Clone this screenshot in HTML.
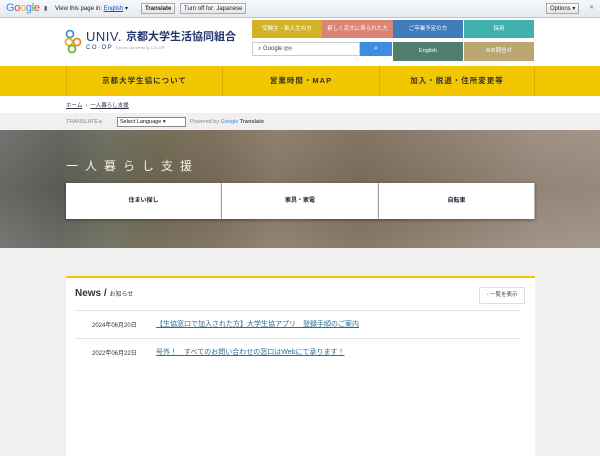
<!DOCTYPE html>
<html><head><meta charset="utf-8"><style>
*{margin:0;padding:0;box-sizing:border-box}
body{width:600px;height:450px;overflow:hidden;background:#f1f1f1;font-family:"Liberation Sans","Noto Sans CJK JP",sans-serif;position:relative}
.a{position:absolute}
.gb{left:0;top:0;width:600px;height:18px;background:linear-gradient(#f6f8fb,#e4e9f1);border-bottom:1px solid #b9c3d3;font-size:6px;color:#222}
.btn{background:linear-gradient(#fdfdfd,#e4e4e4);border:1px solid #aaa;font-size:6px;padding:1px 3px;height:11px;top:3px;line-height:8px}
.hd{left:0;top:18px;width:600px;height:48px;background:#fff}
.cb{color:#fff;font-size:5.5px;text-align:center;line-height:18px;height:18px}
.nav{left:0;top:66px;width:600px;height:30px;background:#f2c700}
.nav div{position:absolute;top:0;height:30px;line-height:30px;text-align:center;font-size:7.5px;color:#333;letter-spacing:1px;border-left:1px solid #d9b200;font-weight:bold}
.box{top:183px;height:36px;background:#fff;font-size:6px;text-align:center;line-height:36px;color:#223;border-right:1px solid #bbb;font-weight:bold}
</style></head><body>
<div class="a gb">
 <span class="a" style="left:6px;top:2px;font-size:11px;letter-spacing:-0.3px"><span style="color:#4285f4">G</span><span style="color:#ea4335">o</span><span style="color:#fbbc05">o</span><span style="color:#4285f4">g</span><span style="color:#34a853">l</span><span style="color:#ea4335">e</span></span>
 <span class="a" style="left:44px;top:5px;color:#557">&#9646;</span>
 <span class="a" style="left:55px;top:5px">View this page in: <u style="color:#15c">English</u> ▾</span>
 <span class="a btn" style="left:141px;font-weight:bold">Translate</span>
 <span class="a btn" style="left:180px">Turn off for: Japanese</span>
 <span class="a btn" style="left:546px">Options ▾</span>
 <span class="a" style="left:589px;top:4px;font-size:6px;color:#777">✕</span>
</div>
<div class="a hd">
 <svg class="a" style="left:64px;top:11px" width="20" height="26" viewBox="0 0 20 26"><circle cx="6" cy="5" r="3.5" fill="none" stroke="#3a9ad9" stroke-width="1.8"/><circle cx="5" cy="13" r="3.5" fill="none" stroke="#e6b21a" stroke-width="1.8"/><circle cx="13" cy="13" r="3.5" fill="none" stroke="#e88a1e" stroke-width="1.8"/><circle cx="8" cy="20" r="3.5" fill="none" stroke="#6cb33f" stroke-width="1.8"/></svg>
 <div class="a" style="left:86px;top:12px;font-size:13px;color:#23356b;letter-spacing:0.5px;line-height:14px">UNIV.</div>
 <div class="a" style="left:126px;top:12px;font-size:11px;color:#23356b;font-weight:bold;line-height:14px">京都大学生活協同組合</div>
 <div class="a" style="left:86px;top:27px;font-size:6px;color:#23356b;letter-spacing:1.5px">CO·OP <span style="font-size:3.5px;letter-spacing:.5px;color:#889">Kyoto University CO-OP</span></div>
 <div class="a cb" style="left:252px;top:2px;width:70px;background:#d3b225">受験生・新入生の方</div>
 <div class="a cb" style="left:322px;top:2px;width:71px;background:#db8473">新しく京大に来られた方</div>
 <div class="a cb" style="left:393px;top:2px;width:70px;background:#3e7cbc">ご卒業予定の方</div>
 <div class="a cb" style="left:464px;top:2px;width:70px;background:#41b1ad">採用</div>
 <div class="a" style="left:252px;top:24px;width:108px;height:14px;border:1px solid #ccc;font-size:6px;line-height:12px;padding-left:5px;color:#444">⌕ Google <span style="font-size:4px">提供</span></div>
 <div class="a" style="left:360px;top:24px;width:32px;height:14px;background:#3d8ee2;color:#fff;font-size:7px;text-align:center;line-height:14px">⌕</div>
 <div class="a cb" style="left:393px;top:24px;width:70px;background:#517f6e;line-height:19px;height:19px">English</div>
 <div class="a cb" style="left:464px;top:24px;width:70px;background:#baa673;line-height:19px;height:19px">✉お問合せ</div>
</div>
<div class="a nav">
 <div style="left:66px;width:156px">京都大学生協について</div>
 <div style="left:222px;width:157px">営業時間・MAP</div>
 <div style="left:379px;width:156px;border-right:1px solid #d9b200">加入・脱退・住所変更等</div>
</div>
<div class="a" style="left:0;top:96px;width:600px;height:17px;background:#fff;font-size:5.5px;color:#334;padding:5px 0 0 66px"><u>ホーム</u> &nbsp;›&nbsp; <u>一人暮らし支援</u></div>
<div class="a" style="left:0;top:113px;width:600px;height:17px;background:#f0f0f0;font-size:5.5px;color:#888">
 <span class="a" style="left:66px;top:6px">TRANSLATE ▸</span>
 <span class="a" style="left:117px;top:4px;width:69px;height:10px;border:1px solid #888;background:#fff;color:#111;font-size:5.5px;padding-left:2px;line-height:8px">Select Language ▾</span>
 <span class="a" style="left:190px;top:6px">Powered by <span style="color:#4285f4">Google</span> <b style="color:#555">Translate</b></span>
</div>
<div class="a" style="left:0;top:130px;width:600px;height:118px;background:linear-gradient(90deg,#6c6c6a 0%,#5f5e58 10%,#6a6a5a 18%,#6e6650 26%,#7a6b58 36%,#8a7a68 46%,#7e6d5c 60%,#8b7b6c 75%,#9a8b7d 90%,#9d8f82 100%)"></div>
<div class="a" style="left:0;top:130px;width:600px;height:118px;background:linear-gradient(rgba(255,255,255,.05),rgba(0,0,0,.05) 50%,rgba(255,255,255,.08))"></div>
<div class="a" style="left:66px;top:157px;font-size:12px;color:#f4f0ea;letter-spacing:7px">一人暮らし支援</div>
<div class="a box" style="left:66px;width:156px;box-shadow:0 1px 3px rgba(0,0,0,.4)">住まい探し</div>
<div class="a box" style="left:222px;width:157px;box-shadow:0 1px 3px rgba(0,0,0,.4)">家具・家電</div>
<div class="a box" style="left:379px;width:156px;box-shadow:0 1px 3px rgba(0,0,0,.4)">自転車</div>
<div class="a" style="left:66px;top:276px;width:469px;height:180px;background:#fff;border-top:2px solid #f2c700"></div>
<div class="a" style="left:75px;top:288px;font-size:10px;font-weight:bold;color:#333">News / <span style="font-size:6px;font-weight:normal">お知らせ</span></div>
<div class="a" style="left:479px;top:287px;width:46px;height:17px;border:1px solid #ddd;font-size:5.5px;color:#444;line-height:15px;text-align:center"><span style="color:#f2c700">•</span> 一覧を表示</div>
<div class="a" style="left:75px;top:310px;width:446px;border-top:1px solid #e3e3e3"></div>
<div class="a" style="left:75px;top:338px;width:446px;border-top:1px solid #e3e3e3"></div>
<div class="a" style="left:92px;top:320px;font-size:6px;color:#333">2024年06月20日</div>
<div class="a" style="left:156px;top:319px;font-size:7px;color:#2a6f95;text-decoration:underline">【生協窓口で加入された方】大学生協アプリ　登録手順のご案内</div>
<div class="a" style="left:92px;top:348px;font-size:6px;color:#333">2022年06月22日</div>
<div class="a" style="left:156px;top:347px;font-size:7px;color:#2a6f95;text-decoration:underline">号外！　すべてのお問い合わせの窓口はWebにて承ります！</div>
</body></html>
